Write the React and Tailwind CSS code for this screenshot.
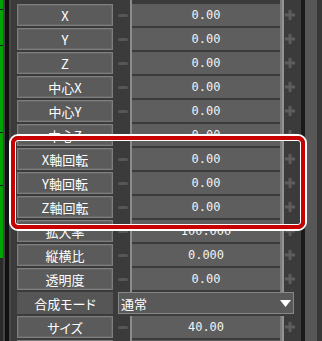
import React from 'react';

const rows = [
  ['X', '0.00'],
  ['Y', '0.00'],
  ['Z', '0.00'],
  ['中心X', '0.00'],
  ['中心Y', '0.00'],
  ['中心Z', '0.00'],
  ['X軸回転', '0.00'],
  ['Y軸回転', '0.00'],
  ['Z軸回転', '0.00'],
  ['拡大率', '100.000'],
  ['縦横比', '0.000'],
  ['透明度', '0.00'],
  ['合成モード', null],
  ['サイズ', '40.00'],
  ['', ''],
];

const jp = "font-['Meiryo_UI','Noto_Sans_CJK_JP',sans-serif] [font-feature-settings:'palt']";

function Plus() {
  return (
    <svg width="10" height="10" viewBox="0 0 10 10">
      <rect x="0" y="3.5" width="10" height="3" fill="#5d5d5d" />
      <rect x="3.5" y="0" width="3" height="10" fill="#5d5d5d" />
    </svg>
  );
}

function ParamRow({ label, value }) {
  return (
    <div className="flex h-[24px] shrink-0">
      <div className={`w-[96px] h-[22px] border border-[#7e7e7e] bg-[#5b5b5b] shadow-[inset_0_0_0_1px_#666] flex items-center justify-center text-white text-[13px] leading-none ${jp}`}>
        {label}
      </div>
      <div className="w-[17px] h-[22px] flex items-center pl-[5px]">
        <span className="w-[10px] h-[3px] rounded-full bg-[#565656]" />
      </div>
      <div className="w-[2px] bg-[#8c8c8c]" />
      <div className="w-[148px] h-[22px] bg-[#5e5e5e] flex items-center justify-center text-[#f2f2f2] text-[12px] font-['DejaVu_Sans_Mono',monospace]">
        {value}
      </div>
      <div className="w-[4px] flex">
        <div className="w-[2px] bg-[#7c7c7c]" />
        <div className="w-[2px] bg-[#939393]" />
      </div>
      <div className="w-[17px] h-[22px] flex items-center pl-[1px]">
        <Plus />
      </div>
    </div>
  );
}

function BlendRow({ label }) {
  return (
    <div className="flex h-[24px] shrink-0">
      <div className={`w-[96px] h-[22px] bg-[#565656] flex items-center justify-center text-white text-[13px] leading-none ${jp}`}>
        {label}
      </div>
      <div className="ml-[5px] w-[176px] h-[22px] border border-[#878787] bg-[#595959] flex items-center justify-between pl-[2px] pr-[2px]">
        <span className={`text-white text-[13px] leading-none ${jp}`}>通常</span>
        <svg width="11" height="7" viewBox="0 0 11 7">
          <polygon points="0,0 11,0 5.5,7" fill="#ffffff" />
        </svg>
      </div>
    </div>
  );
}

export default function App() {
  return (
    <div className="relative w-[322px] h-[341px] overflow-hidden bg-[#3a3a3a] flex">
      {/* left edge of neighbouring panel */}
      <div className="w-[3px] flex flex-col">
        <div className="h-[9px] bg-[#00a400]" />
        <div className="h-[1px] bg-[#1a1a1a]" />
        <div className="h-[35px] bg-[#00a400]" />
        <div className="h-[1px] bg-[#1a1a1a]" />
        <div className="h-[86px] bg-[#00a400]" />
        <div className="h-[1px] bg-[#1a1a1a]" />
        <div className="h-[52px] bg-[#00a400]" />
        <div className="h-[1px] bg-[#1a1a1a]" />
        <div className="h-[72px] bg-[#00a400]" />
        <div className="flex-1 bg-[#2a2a2a]" />
      </div>
      <div className="w-[2px] bg-[#444444]" />
      <div className="w-[4px] bg-[#101010]" />
      <div className="w-[2px] bg-[#474747]" />

      {/* parameter list */}
      <div className="w-[290px] pl-[6px] flex flex-col bg-[#3b3b3b]">
        <div className="flex h-[4px] shrink-0">
          <div className="w-[113px]" />
          <div className="w-[2px] bg-[#8c8c8c]" />
          <div className="w-[148px]" />
          <div className="w-[4px] flex">
            <div className="w-[2px] bg-[#7c7c7c]" />
            <div className="w-[2px] bg-[#939393]" />
          </div>
        </div>
        {rows.map(([label, value], i) =>
          value === null ? (
            <BlendRow key={i} label={label} />
          ) : (
            <ParamRow key={i} label={label} value={value} />
          )
        )}
      </div>

      {/* scrollbar */}
      <div className="w-[4px] bg-[#1a1a1a]" />
      <div className="w-[12px] bg-[#575757]" />
      <div className="flex-1 bg-[#383838]" />

      {/* highlight frame */}
      <div className="absolute left-[9px] top-[134px] w-[298px] h-[97px] rounded-[9px] border-2 border-white">
        <div className="w-full h-full rounded-[7px] border-4 border-[#c80000] shadow-[inset_0_0_0_1px_#ffffff]" />
      </div>
    </div>
  );
}
